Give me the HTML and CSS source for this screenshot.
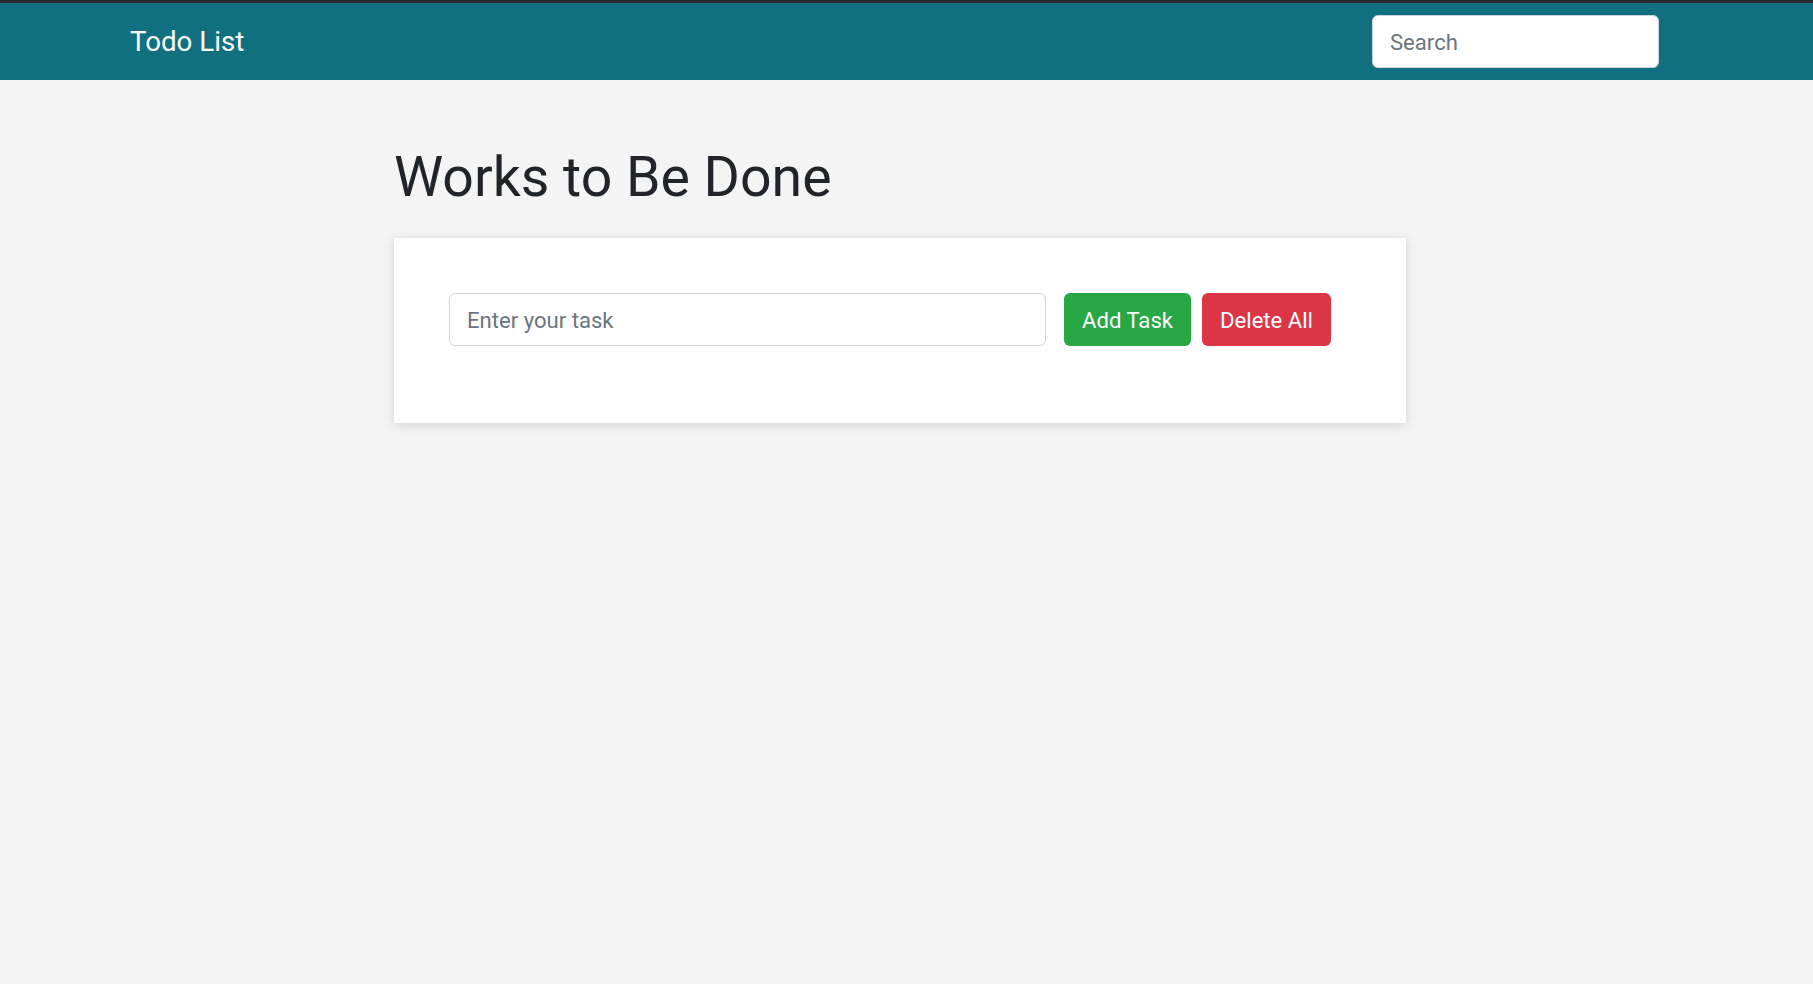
FILE: index.html
```html
<!DOCTYPE html>
<html lang="en">
<head>
<meta charset="utf-8">
<title>Todo List</title>
<link rel="stylesheet" href="styles.css">
</head>
<body>
<nav class="navbar">
  <a class="brand" href="#">Todo List</a>
  <input class="search" type="text" placeholder="Search">
</nav>
<main class="main">
  <h1 class="title">Works to Be Done</h1>
  <section class="card">
    <form class="task-form">
      <input class="task-input" type="text" placeholder="Enter your task">
      <button class="btn btn-add" type="button">Add Task</button>
      <button class="btn btn-delete" type="button">Delete All</button>
    </form>
  </section>
</main>
</body>
</html>
```

FILE: styles.css
```css
* { box-sizing: border-box; }
html, body { margin: 0; padding: 0; }
body {
  background: #f4f4f4;
  font-family: Roboto, "Liberation Sans", sans-serif;
  color: #212529;
  min-height: 984px;
}
.navbar {
  border-top: 3px solid #262a2c;
  background: #11707f;
  height: 80px;
  display: flex;
  align-items: center;
  justify-content: space-between;
  padding: 0 154px 0 130px;
}
.brand {
  color: #fff;
  text-decoration: none;
  font-size: 27.7px;
  line-height: 1.2;
}
.search {
  width: 287px;
  height: 53px;
  border: 1px solid #ced4da;
  border-radius: 6px;
  background: #fff;
  padding: 0 17px;
  font-family: Roboto, "Liberation Sans", sans-serif;
  font-size: 22.1px;
  color: #495057;
  outline: none;
}
.search::placeholder, .task-input::placeholder { color: #6c757d; opacity: 1; }
.main {
  padding-left: 394px;
  padding-top: 65px;
}
.title {
  margin: 0 0 27px 0;
  font-size: 55.4px;
  font-weight: 400;
  line-height: 1.2;
  color: #212529;
}
.card {
  width: 1012px;
  background: #fff;
  box-shadow: 0 2px 10px rgba(0,0,0,0.14);
  padding: 55px 55px 77px 55px;
}
.task-form {
  display: flex;
  align-items: center;
}
.task-input {
  width: 597px;
  height: 53px;
  border: 1px solid #ced4da;
  border-radius: 6px;
  padding: 0 17px;
  font-family: Roboto, "Liberation Sans", sans-serif;
  font-size: 22.1px;
  color: #495057;
  outline: none;
  margin-right: 18px;
}
.btn {
  height: 53px;
  border: none;
  border-radius: 6px;
  color: #fff;
  font-family: Roboto, "Liberation Sans", sans-serif;
  font-size: 22.1px;
  padding: 0;
  white-space: nowrap;
  text-align: center;
  cursor: pointer;
}
.btn-add { background: #28a745; width: 127px; margin-right: 11px; }
.btn-delete { background: #dc3545; width: 129px; }
```
